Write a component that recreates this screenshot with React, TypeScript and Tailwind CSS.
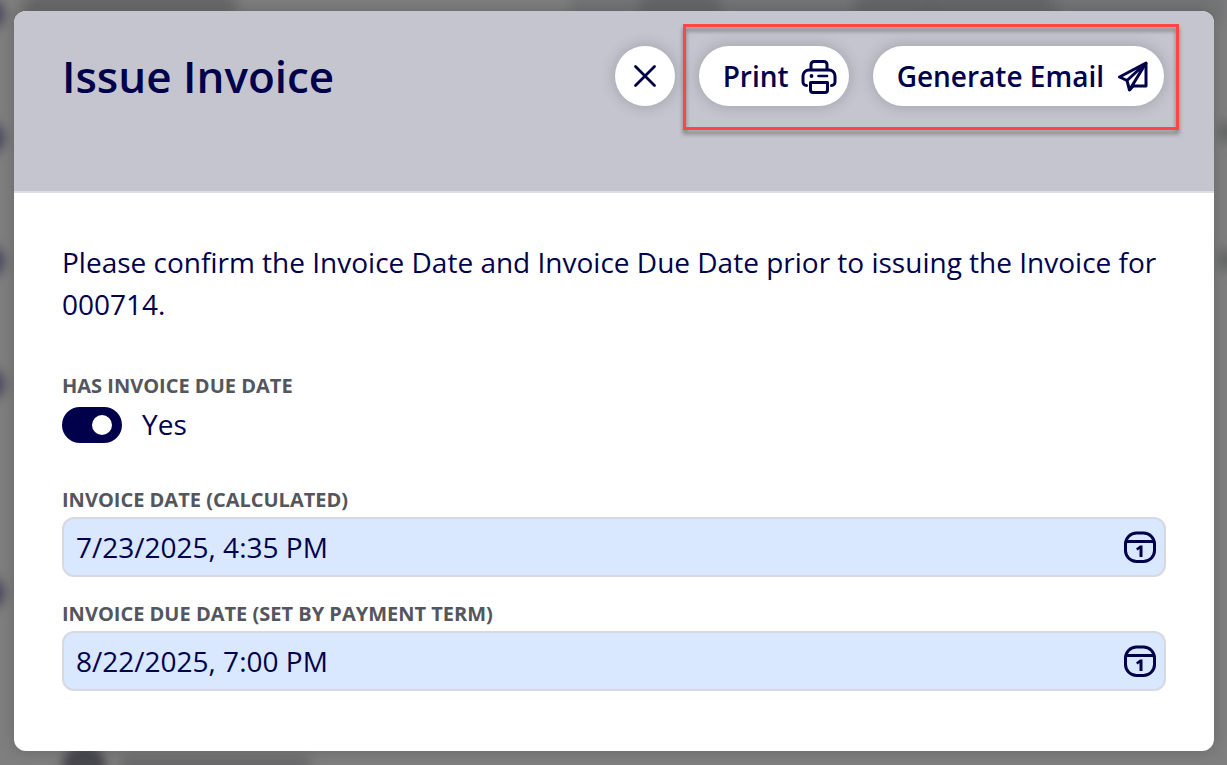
import { useState } from "react"

type DateFieldProps = {
  id: string
  label: string
  value: string
  onChange: (value: string) => void
}

const PrintIcon = () => (
  <svg width="36" height="38" viewBox="0 0 36 38" fill="none" stroke="currentColor" strokeWidth="3" strokeLinejoin="round" strokeLinecap="round" aria-hidden="true">
    <path d="M10 12V7.500a3 3 0 0 1 3-3h10a3 3 0 0 1 3 3V12" />
    <path d="M5.500 28.500A3.500 3.500 0 0 1 2 25v-6a6 6 0 0 1 6-6h20a6 6 0 0 1 6 6v6a3.500 3.500 0 0 1-3.500 3.500" />
    <path d="M9.500 25.500h17v7.500a2.500 2.500 0 0 1-2.500 2.500h-12a2.500 2.500 0 0 1-2.500-2.500z" />
    <path d="M17.500 19h8.500" strokeWidth="2.600" />
    <circle cx="10.500" cy="19" r="1.900" fill="currentColor" stroke="none" />
  </svg>
)

const SendIcon = () => (
  <svg width="32" height="32" viewBox="-1 0 32 32" fill="none" stroke="currentColor" strokeWidth="3" strokeLinejoin="round" aria-hidden="true">
    <path d="M29 3L2.500 17l7.500 3.500L29 3L12.500 30l-2.500-9.500" />
    <path d="M29 3V26H15" />
    <path d="M12.500 30l5-5.500" />
  </svg>
)

const CalendarIcon = () => (
  <svg width="32" height="32" viewBox="0 0 32 32" fill="none" stroke="currentColor" strokeWidth="3" aria-hidden="true">
    <rect x="1.500" y="2" width="29" height="28.500" rx="11" />
    <path d="M2.500 10.500h27" />
    <path d="M12 17.500l4-3h2.500V26h-3V18l-2 1.500z" fill="currentColor" stroke="none" />
  </svg>
)

const DateField = ({ id, label, value, onChange }: DateFieldProps) => (
  <div className="flex flex-col gap-[3px]">
    <label htmlFor={id} className="text-[20px] leading-[28px] font-bold text-[#54565e] uppercase">{label}</label>
    <div className="relative">
      <input
        id={id}
        type="text"
        value={value}
        onChange={(e) => onChange(e.target.value)}
        className="block w-full h-[60px] rounded-xl border-2 border-[#d8d8e0] bg-[#d9e7ff] pl-3 pr-14 text-[28px]"
      />
      <button type="button" aria-label={"Pick " + label} className="absolute right-[10px] top-[14px]">
        <CalendarIcon />
      </button>
    </div>
  </div>
)

// blurred page content that shows round the edges of the dialog
const Backdrop = () => (
  <div className="absolute inset-0 overflow-hidden bg-[#7f7f7f]" aria-hidden="true">
    <div className="absolute left-[570px] right-0 -top-3 h-8 bg-[#747577] blur-[6px]"></div>
    <div className="absolute left-6 -top-2 h-6 w-[212px] rounded bg-[#68686a] blur-[7px]"></div>
    <div className="absolute left-[640px] -top-2 h-6 w-[80px] rounded bg-[#66676a] blur-[6px]"></div>
    <div className="absolute left-[855px] -top-2 h-6 w-[90px] rounded bg-[#66676a] blur-[6px]"></div>
    <div className="absolute left-[935px] -top-2 h-6 w-[120px] rounded bg-[#66676a] blur-[7px]"></div>
    <div className="absolute -left-7 top-0 h-7 w-8 rounded-full bg-[#42425a] blur-[6px]"></div>
    <div className="absolute -left-7 top-[122px] h-8 w-8 rounded-full bg-[#42425a] blur-[6px]"></div>
    <div className="absolute -left-7 top-[245px] h-8 w-8 rounded-full bg-[#42425a] blur-[6px]"></div>
    <div className="absolute -left-7 top-[368px] h-8 w-8 rounded-full bg-[#42425a] blur-[6px]"></div>
    <div className="absolute -left-7 top-[577px] h-8 w-8 rounded-full bg-[#42425a] blur-[6px]"></div>
    <div className="absolute -right-3 top-[122px] h-5 w-5 rounded bg-[#646566] blur-[6px]"></div>
    <div className="absolute -right-3 top-[250px] h-5 w-5 rounded bg-[#646566] blur-[6px]"></div>
    <div className="absolute left-[62px] -bottom-6 h-11 w-11 rounded-full bg-[#48484f] blur-[5px]"></div>
    <div className="absolute left-[120px] -bottom-3 h-5 w-[190px] rounded bg-[#68686a] blur-[6px]"></div>
  </div>
)

const App = () => {
  const [hasDueDate, setHasDueDate] = useState(true)
  const [invoiceDate, setInvoiceDate] = useState("7/23/2025, 4:35 PM")
  const [dueDate, setDueDate] = useState("8/22/2025, 7:00 PM")

  return (
    <div className="relative min-h-screen pl-[14px] pr-[13px] pt-[11px] pb-[14px] font-['Open_Sans',sans-serif] text-[#00004b]">
      <Backdrop />
      <div role="dialog" aria-labelledby="title" className="relative rounded-xl overflow-hidden bg-white shadow-[0_0_16px_rgba(0,0,0,0.2)]">
        <header className="flex items-start justify-between bg-[#c5c5cf] border-b-2 border-[#dddde3] pl-12 pr-[50px] pt-[35px] pb-[85px]">
          <h1 id="title" className="text-[44px] leading-[60px] font-semibold">Issue Invoice</h1>
          <div className="flex gap-6 text-[28px] font-semibold">
            <button type="button" aria-label="Close" className="flex items-center justify-center w-[60px] h-[60px] rounded-full bg-white shadow-[0_0_16px_rgba(0,0,0,0.2)]">
              <svg width="24" height="24" viewBox="0 0 24 24" fill="none" stroke="currentColor" strokeWidth="2.800" strokeLinecap="round" aria-hidden="true">
                <path d="M2.500 2.500l19 19M21.500 2.500l-19 19" />
              </svg>
            </button>
            <div className="relative flex gap-6">
              <button type="button" className="flex items-center gap-3 h-[60px] pl-6 pr-3 rounded-full bg-white shadow-[0_0_16px_rgba(0,0,0,0.2)]">
                Print
                <PrintIcon />
              </button>
              <button type="button" className="flex items-center gap-3 h-[60px] pl-6 pr-4 rounded-full bg-white shadow-[0_0_16px_rgba(0,0,0,0.2)]">
                Generate Email
                <SendIcon />
              </button>
              <div className="pointer-events-none absolute -left-4 -right-[15px] -top-[22px] -bottom-6 border-3 border-[#ff4545] drop-shadow-[0_4px_2px_rgba(0,0,0,0.4)]"></div>
            </div>
          </div>
        </header>
        <main className="px-12 pt-12 pb-[60px]">
          <p className="text-[28px] leading-[42px]">
            Please confirm the Invoice Date and Invoice Due Date prior to issuing the Invoice for 000714.
          </p>
          <div className="mt-[47px] flex flex-col gap-[23px]">
            <div className="flex flex-col gap-[3px]">
              <label htmlFor="has-due-date" className="text-[20px] leading-[28px] font-bold text-[#54565e] uppercase">Has Invoice Due Date</label>
              <div className="flex items-start h-[60px] pt-1 gap-5 text-[28px] leading-[34px]">
                <input
                  id="has-due-date"
                  type="checkbox"
                  role="switch"
                  checked={hasDueDate}
                  onChange={(e) => setHasDueDate(e.target.checked)}
                  className="appearance-none flex items-center w-[60px] h-9 px-[10px] rounded-full bg-[#8a8a96] checked:bg-[#00004b] checked:justify-end before:block before:size-5 before:rounded-full before:bg-white"
                />
                <span>{hasDueDate ? "Yes" : "No"}</span>
              </div>
            </div>
            <DateField id="invoice-date" label="Invoice Date (Calculated)" value={invoiceDate} onChange={setInvoiceDate} />
            <DateField id="due-date" label="Invoice Due Date (Set by Payment Term)" value={dueDate} onChange={setDueDate} />
          </div>
        </main>
      </div>
    </div>
  )
}
export default App
